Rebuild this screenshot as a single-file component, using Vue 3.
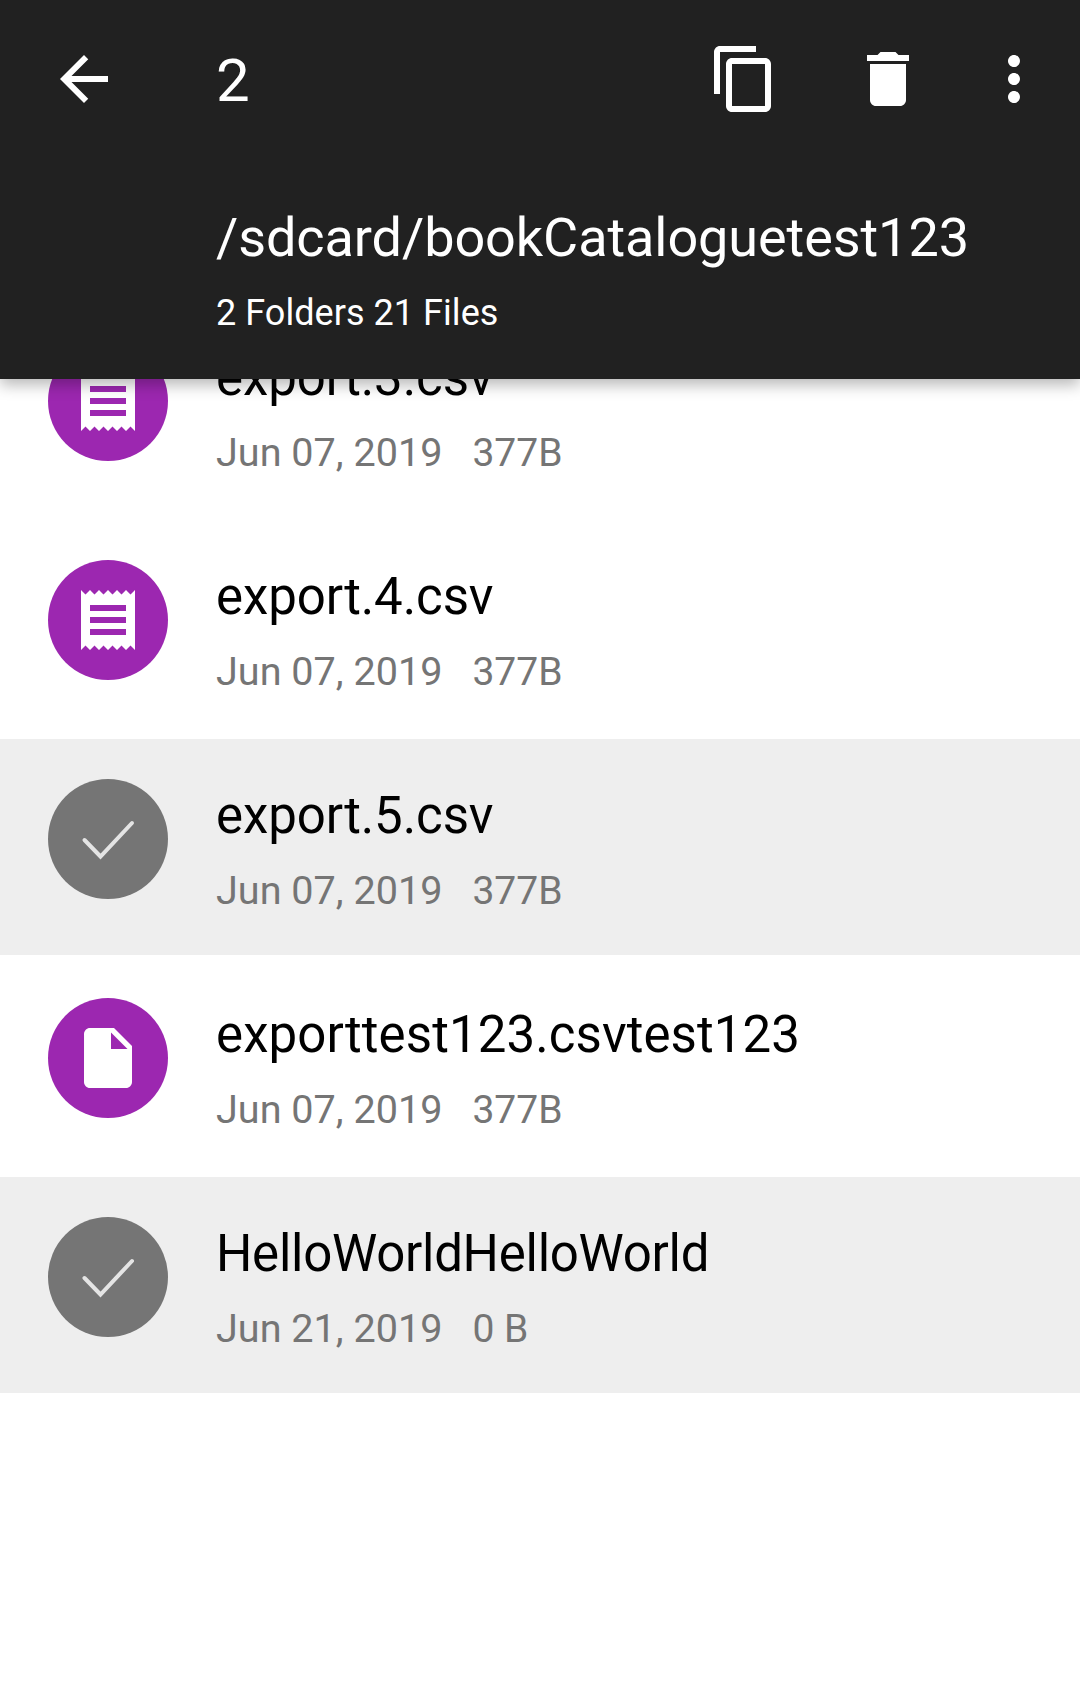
<script setup>
const rows = [
  { name: 'export.3.csv', date: 'Jun 07, 2019', size: '377B', kind: 'receipt', tracking: '-0.09px' },
  { name: 'export.4.csv', date: 'Jun 07, 2019', size: '377B', kind: 'receipt', tracking: '-0.09px' },
  { name: 'export.5.csv', date: 'Jun 07, 2019', size: '377B', kind: 'check', tracking: '-0.09px' },
  { name: 'exporttest123.csvtest123', date: 'Jun 07, 2019', size: '377B', kind: 'doc', tracking: '0.09px' },
  { name: 'HelloWorldHelloWorld', date: 'Jun 21, 2019', size: '0 B', kind: 'check', tracking: '-0.27px' },
]
</script>

<template>
  <div class="page">
    <header class="appbar">
      <div class="toolbar">
        <svg class="icon" viewBox="0 0 24 24"><path d="M20 11H7.83l5.59-5.59L12 4l-8 8 8 8 1.41-1.41L7.83 13H20v-2z" /></svg>
        <span class="count">2</span>
        <svg class="icon action-copy" viewBox="0 0 24 24"><path d="M16 1H4c-1.1 0-2 .9-2 2v14h2V3h12V1zm3 4H8c-1.1 0-2 .9-2 2v14c0 1.1.9 2 2 2h11c1.1 0 2-.9 2-2V7c0-1.1-.9-2-2-2zm0 16H8V7h11v14z" /></svg>
        <svg class="icon action-delete" viewBox="0 0 24 24"><path d="M6 19c0 1.1.9 2 2 2h8c1.1 0 2-.9 2-2V7H6v12zM19 4h-3.5l-1-1h-5l-1 1H5v2h14V4z" /></svg>
        <svg class="icon" viewBox="0 0 24 24"><path d="M12 8c1.1 0 2-.9 2-2s-.9-2-2-2-2 .9-2 2 .9 2 2 2zm0 2c-1.1 0-2 .9-2 2s.9 2 2 2 2-.9 2-2-.9-2-2-2zm0 6c-1.1 0-2 .9-2 2s.9 2 2 2 2-.9 2-2-.9-2-2-2z" /></svg>
      </div>
      <div class="path">/sdcard/bookCataloguetest123</div>
      <div class="summary">2 Folders 21 Files</div>
    </header>

    <main class="list">
      <div v-for="row in rows" :key="row.name" class="row" :class="{ 'row--selected': row.kind === 'check' }">
        <div class="avatar" :class="{ 'avatar--selected': row.kind === 'check' }">
          <svg v-if="row.kind === 'receipt'" class="glyph" viewBox="0 0 24 24"><path d="M18 17H6v-2h12v2zm0-4H6v-2h12v2zm0-4H6V7h12v2zM3 22l1.5-1.5L6 22l1.5-1.5L9 22l1.5-1.5L12 22l1.5-1.5L15 22l1.5-1.5L18 22l1.5-1.5L21 22V2l-1.5 1.5L18 2l-1.5 1.5L15 2l-1.5 1.5L12 2l-1.5 1.5L9 2 7.5 3.5 6 2 4.5 3.5 3 2v20z" /></svg>
          <svg v-else-if="row.kind === 'doc'" class="glyph" viewBox="0 0 24 24"><path d="M6 2c-1.1 0-1.99.9-1.99 2L4 20c0 1.1.89 2 1.99 2H18c1.1 0 2-.9 2-2V8l-6-6H6zm7 7V3.5L18.5 9H13z" /></svg>
          <svg v-else class="tick" viewBox="0 0 120 120"><polyline points="36.5,61 52.5,77.5 84,44" /></svg>
        </div>
        <div class="info">
          <div class="name" :style="{ letterSpacing: row.tracking }">{{ row.name }}</div>
          <div class="meta">
            <span class="date">{{ row.date }}</span>
            <span class="size">{{ row.size }}</span>
          </div>
        </div>
      </div>
    </main>
  </div>
</template>

<style>
html, body {
  margin: 0;
  background: #fff;
}
</style>

<style scoped>
.page {
  width: 1080px;
  height: 1699px;
  overflow: hidden;
  background: #fff;
  font-family: Roboto, sans-serif;
}

.appbar {
  position: relative;
  z-index: 1;
  box-sizing: border-box;
  height: 379px;
  background: #212121;
  color: #fff;
  box-shadow: 0 6px 14px rgba(0, 0, 0, 0.28);
}

.toolbar {
  display: flex;
  align-items: flex-start;
  padding: 43px 30px 0 48px;
}

.icon {
  flex: 0 0 72px;
  width: 72px;
  height: 72px;
  fill: #fff;
}

.count {
  flex: 1;
  margin-left: 96px;
  padding-top: 2px;
  font-size: 60px;
  line-height: 72px;
}

.action-copy {
  margin-right: 72px;
}

.action-delete {
  margin-right: 54px;
}

.path {
  margin: 89px 0 0 216px;
  font-size: 54px;
  line-height: 64px;
  letter-spacing: -0.08px;
  white-space: nowrap;
}

.summary {
  margin: 21px 0 0 216px;
  font-size: 36px;
  line-height: 44px;
  letter-spacing: 0.05px;
}

.list {
  margin-top: -78px;
}

.row {
  display: flex;
  align-items: flex-start;
  box-sizing: border-box;
  height: 216px;
  margin-bottom: 3px;
  padding: 40px 0 0 48px;
}

.row--selected {
  background: #eeeeee;
}

.avatar {
  display: flex;
  align-items: center;
  justify-content: center;
  flex: 0 0 120px;
  width: 120px;
  height: 120px;
  border-radius: 50%;
  background: #9c27b0;
}

.avatar--selected {
  background: #757575;
}

.glyph {
  width: 72px;
  height: 72px;
  fill: #fff;
}

.tick {
  width: 120px;
  height: 120px;
  fill: none;
  stroke: #e4e4e4;
  stroke-width: 4;
  stroke-linecap: round;
}

.info {
  margin-left: 48px;
  padding-top: 9px;
}

.name {
  font-size: 51px;
  line-height: 56px;
  color: #000;
  white-space: nowrap;
}

.meta {
  margin-top: 25px;
  font-size: 39.6px;
  line-height: 44px;
  color: #757575;
}

.date {
  margin-right: 30px;
}

.size {
  font-size: 39px;
}
</style>
